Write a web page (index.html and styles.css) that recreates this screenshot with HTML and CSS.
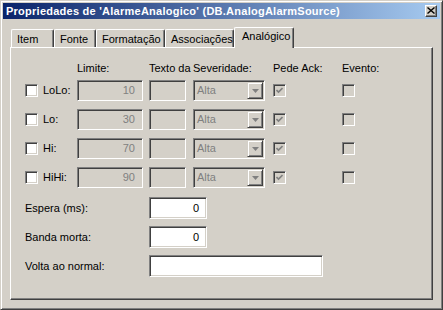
FILE: index.html
```html
<!DOCTYPE html>
<html>
<head>
<meta charset="utf-8">
<link rel="stylesheet" href="styles.css">
</head>
<body>
<div class="window">
  <div class="titlebar">
    <span class="title">Propriedades de 'AlarmeAnalogico' (DB.AnalogAlarmSource)</span>
    <span class="close"><svg width="8" height="7" viewBox="0 0 8 7"><path d="M0.5 0.5 L7.5 6.5 M7.5 0.5 L0.5 6.5" stroke="#000" stroke-width="1.4" fill="none"/></svg></span>
  </div>
  <div class="client">
    <div class="tabs">
      <div class="tab w-item">Item</div>
      <div class="tab w-fonte">Fonte</div>
      <div class="tab w-form">Formatação</div>
      <div class="tab w-assoc">Associações</div>
      <div class="tab tab-sel w-anal">Analógico</div>
    </div>
    <div class="panel">
      <div class="cols hdr">
        <span class="c-limit">Limite:</span>
        <span class="c-texto">Texto da</span>
        <span class="c-combo">Severidade:</span>
        <span class="c-pede">Pede Ack:</span>
        <span class="c-evento">Evento:</span>
      </div>
      <div class="cols rows">
        <span class="cb c-cb"></span><span class="lbl">LoLo:</span>
        <span class="box dis c-limit num">10</span>
        <span class="box dis c-texto"></span>
        <span class="box dis combo c-combo"><span class="ctext">Alta</span><span class="dbtn"><svg width="7" height="4" viewBox="0 0 7 4"><path d="M0 0H7L3.5 4Z" fill="#808080"/></svg></span></span>
        <span class="cb dis c-pede"><svg width="7" height="7" viewBox="0 0 7 7"><path d="M0.5 3 L2.5 5 L6.5 1" stroke="#808080" stroke-width="1.6" fill="none"/></svg></span>
        <span class="cb dis c-evento"></span>

        <span class="cb c-cb"></span><span class="lbl">Lo:</span>
        <span class="box dis c-limit num">30</span>
        <span class="box dis c-texto"></span>
        <span class="box dis combo c-combo"><span class="ctext">Alta</span><span class="dbtn"><svg width="7" height="4" viewBox="0 0 7 4"><path d="M0 0H7L3.5 4Z" fill="#808080"/></svg></span></span>
        <span class="cb dis c-pede"><svg width="7" height="7" viewBox="0 0 7 7"><path d="M0.5 3 L2.5 5 L6.5 1" stroke="#808080" stroke-width="1.6" fill="none"/></svg></span>
        <span class="cb dis c-evento"></span>

        <span class="cb c-cb"></span><span class="lbl">Hi:</span>
        <span class="box dis c-limit num">70</span>
        <span class="box dis c-texto"></span>
        <span class="box dis combo c-combo"><span class="ctext">Alta</span><span class="dbtn"><svg width="7" height="4" viewBox="0 0 7 4"><path d="M0 0H7L3.5 4Z" fill="#808080"/></svg></span></span>
        <span class="cb dis c-pede"><svg width="7" height="7" viewBox="0 0 7 7"><path d="M0.5 3 L2.5 5 L6.5 1" stroke="#808080" stroke-width="1.6" fill="none"/></svg></span>
        <span class="cb dis c-evento"></span>

        <span class="cb c-cb"></span><span class="lbl">HiHi:</span>
        <span class="box dis c-limit num">90</span>
        <span class="box dis c-texto"></span>
        <span class="box dis combo c-combo"><span class="ctext">Alta</span><span class="dbtn"><svg width="7" height="4" viewBox="0 0 7 4"><path d="M0 0H7L3.5 4Z" fill="#808080"/></svg></span></span>
        <span class="cb dis c-pede"><svg width="7" height="7" viewBox="0 0 7 7"><path d="M0.5 3 L2.5 5 L6.5 1" stroke="#808080" stroke-width="1.6" fill="none"/></svg></span>
        <span class="cb dis c-evento"></span>
      </div>
      <div class="form">
        <span class="flbl">Espera (ms):</span><span class="box fin num w-short">0</span>
        <span class="flbl">Banda morta:</span><span class="box fin num w-short">0</span>
        <span class="flbl">Volta ao normal:</span><span class="box fin w-long"></span>
      </div>
    </div>
  </div>
</div>
</body>
</html>
```
FILE: styles.css
```css
* { box-sizing: border-box; }
html, body { margin: 0; padding: 0; }
body {
  width: 443px; height: 310px; overflow: hidden;
  background: #d4d0c8;
  font-family: "Liberation Sans", Arial, sans-serif;
  font-size: 11px; color: #000;
}
.window {
  width: 443px; height: 310px;
  display: flex; flex-direction: column;
  background: #d4d0c8;
  border: 1px solid; border-color: #d4d0c8 #404040 #404040 #d4d0c8;
  box-shadow: inset 1px 1px #fff, inset -1px -1px #808080;
  padding: 2px;
}
.titlebar {
  height: 16px; flex: none;
  display: flex; align-items: center; justify-content: space-between;
  background: linear-gradient(to right, #0a246a, #a6caf0);
  padding: 0 3px 0 3px;
}
.title {
  color: #fff; font-weight: bold; font-size: 11px; line-height: 16px;
  white-space: nowrap; letter-spacing: 0.25px;
}
.close {
  width: 12px; height: 12px;
  display: flex; align-items: center; justify-content: center;
  background: #d4d0c8;
  border: 1px solid; border-color: #fff #404040 #404040 #fff;
  box-shadow: inset -1px -1px #808080;
  padding-bottom: 1px;
}
.close svg { display: block; }
.client {
  flex: 1; display: flex; flex-direction: column;
  padding: 8px 7px 7px 7px;
  min-height: 0;
}
.tabs {
  display: flex; align-items: flex-end; height: 20px; flex: none;
  padding-left: 1px; position: relative; z-index: 2;
}
.tab {
  height: 18px; line-height: 16px;
  padding: 1px 0 0 5px; white-space: nowrap;
  border-top: 1px solid #fff; border-left: 1px solid #fff;
  border-right: 1px solid #404040;
  box-shadow: inset -1px 0 #808080;
  border-top-left-radius: 2px; border-top-right-radius: 2px;
}
.tab-sel {
  height: 21px; margin-bottom: -1px; background: #d4d0c8;
  padding-left: 7px; padding-top: 1px; line-height: 15px;
}
.w-item { width: 43px; }
.w-fonte { width: 42px; }
.w-form { width: 69px; }
.w-assoc { width: 69px; }
.w-anal { width: 60px; }
.panel {
  flex: 1; position: relative; z-index: 1;
  min-height: 0;
  border: 1px solid; border-color: #fff #404040 #404040 #fff;
  box-shadow: inset -1px -1px #808080;
  padding: 14px 0 0 14px;
}
.cols {
  display: grid;
  grid-template-columns: 18px 34px 66px 6px 37px 7px 72px 8px 69px 13px;
}
.hdr { height: 13px; line-height: 13px; margin-bottom: 5px; }
.hdr span { white-space: nowrap; }
.rows { grid-auto-rows: 21px; row-gap: 8px; align-items: center; }
.cb {
  width: 13px; height: 13px; background: #fff;
  border: 1px solid; border-color: #808080 #fff #fff #808080;
  box-shadow: inset 1px 1px #404040, inset -1px -1px #d4d0c8;
  display: flex; align-items: center; justify-content: center;
}
.cb.dis { background: #d4d0c8; }
.cb svg { display: block; }
.c-cb { grid-column: 1; }
.lbl { grid-column: 2; line-height: 13px; }
.c-limit { grid-column: 3; }
.c-texto { grid-column: 5; }
.c-combo { grid-column: 7; }
.c-pede { grid-column: 9; }
.c-evento { grid-column: 10; }
.box {
  height: 21px; align-self: stretch;
  border: 1px solid; border-color: #808080 #fff #fff #808080;
  box-shadow: inset 1px 1px #404040, inset -1px -1px #d4d0c8;
  background: #fff; line-height: 19px; padding: 0 7px 0 3px;
}
.box.dis { background: #d4d0c8; color: #808080; }
.num { text-align: right; }
.combo {
  display: flex; justify-content: space-between; padding: 1px 1px 1px 3px;
  line-height: 17px;
}
.dbtn {
  width: 16px; height: 17px; background: #d4d0c8;
  border: 1px solid; border-color: #d4d0c8 #404040 #404040 #d4d0c8;
  box-shadow: inset 1px 1px #fff, inset -1px -1px #808080;
  display: flex; align-items: center; justify-content: center;
  padding-left: 1px;
}
.dbtn svg { display: block; }
.form {
  margin-top: 9px;
  display: grid; grid-template-columns: 124px auto;
  grid-auto-rows: 22px; row-gap: 7px; align-items: center;
  justify-items: start;
}
.flbl { line-height: 13px; }
.fin { height: 22px; line-height: 20px; }
.w-short { width: 58px; }
.w-long { width: 174px; }
```
